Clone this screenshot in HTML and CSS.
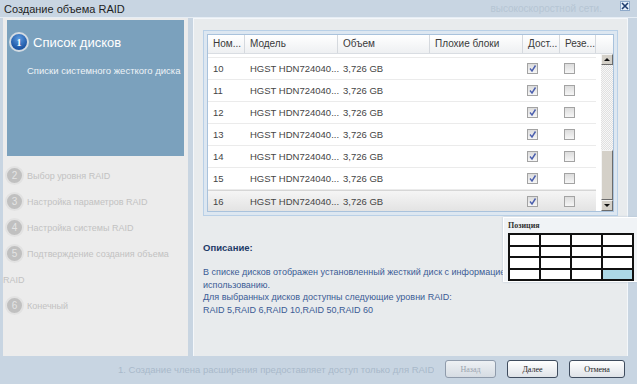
FILE: index.html
```html
<!DOCTYPE html>
<html lang="ru">
  <head>
    <meta charset="UTF-8" />
    <meta name="viewport" content="width=device-width, initial-scale=1.0" />
    <title>Создание объема RAID</title>
    <link rel="stylesheet" href="styles.css">
  </head>
  <body>
    <div class="window">
      <div class="titlebar">
        <span class="title">Создание объема RAID</span>
        <span class="ghost">высокоскоростной сети.</span>
        <span class="close">
          <svg width="8" height="8" viewBox="0 0 8 8">
            <path d="M1 1L7 7M7 1L1 7" stroke="#1f3d6e" stroke-width="1.6" />
          </svg>
        </span>
      </div>

      <div class="dialog">
        <div class="steps">
          <div class="current">
            <div class="current-head"><span class="num">1</span>Список дисков</div>
            <div class="current-desc">Списки системного жесткого диска</div>
          </div>
          <div class="todo">
            <span class="dot">2</span>Выбор уровня RAID<br />
            <span class="dot">3</span>Настройка параметров RAID<br />
            <span class="dot">4</span>Настройка системы RAID<br />
            <span class="dot">5</span>Подтверждение создания объема RAID<br />
            <span class="dot">6</span>Конечный
          </div>
        </div>

        <div class="main">
          <div class="grid-frame">
            <div class="grid">
              <div class="grid-head">
                <div class="hcell">Ном...</div>
                <div class="hcell">Модель</div>
                <div class="hcell">Объем</div>
                <div class="hcell">Плохие блоки</div>
                <div class="hcell">Дост...</div>
                <div class="hcell">Резе...</div>
                <div class="hcell"></div>
              </div>
              <div class="grid-body">
                <div class="rows" id="rows"></div>
                <div class="scrollbar">
                  <div class="sb-btn"><span class="arrow up"></span></div>
                  <div class="sb-track"></div>
                  <div class="sb-thumb"></div>
                  <div class="sb-btn"><span class="arrow down"></span></div>
                </div>
              </div>
            </div>
          </div>

          <div class="desc">
            <div class="desc-title">Описание:</div>
            <div class="desc-text">
              В списке дисков отображен установленный жесткий диск с информацией по<br />
              использованию.<br />
              Для выбранных дисков доступны следующие уровни RAID:<br />
              RAID 5,RAID 6,RAID 10,RAID 50,RAID 60
            </div>
          </div>
        </div>
      </div>

      <div class="footer">
        <span class="note">1. Создание члена расширения предоставляет доступ только для RAID 5, 6</span>
        <button class="btn" disabled>Назад</button>
        <button class="btn">Далее</button>
        <button class="btn">Отмена</button>
      </div>
    </div>

    <div class="position">
      <div class="position-title">Позиция</div>
      <div class="position-grid">
        <span></span><span></span><span></span><span></span>
        <span></span><span></span><span></span><span></span>
        <span></span><span></span><span></span><span></span>
        <span></span><span></span><span></span><span class="on"></span>
      </div>
    </div>

    <script>
      let disks = [];
      for (let n = 9; n <= 16; n++) {
        disks.push({ num: n, model: "HGST HDN724040...", size: "3,726 GB" });
      }

      let check = '<svg width="9" height="9" viewBox="0 0 9 9"><path d="M2 4.5L4 7L7.5 1.5" fill="none" stroke="#4b5fae" stroke-width="1.4"/></svg>';

      // first row is scrolled mostly out of view
      let rows = document.getElementById("rows");
      disks.forEach((d, i) => {
        let row = document.createElement("div");
        row.className = "row";
        if (i == 0) row.className += " partial";
        if (i == disks.length - 1) row.className += " selected";
        row.innerHTML =
          `<div class="cell txt">${d.num}</div>` +
          `<div class="cell txt">${d.model}</div>` +
          `<div class="cell txt">${d.size}</div>` +
          `<div class="cell"></div>` +
          `<div class="cell box-cell"><span class="box">${check}</span></div>` +
          `<div class="cell box-cell"><span class="box"></span></div>`;
        rows.appendChild(row);
      });
    </script>
  </body>
</html>
```

FILE: styles.css
```css
body {
  margin: 0;
  padding: 0;
  width: 637px;
  height: 384px;
  overflow: hidden;
  background: #c8d5e2;
  font-family: "Liberation Sans", Arial, sans-serif;
  font-size: 10px;
  position: relative;
}
.window {
  width: 637px;
  height: 384px;
  display: flex;
  flex-direction: column;
}

/* title bar */
.titlebar {
  height: 17px;
  display: flex;
  align-items: center;
  padding: 0 7px 0 4px;
  box-sizing: border-box;
}
.title {
  font-size: 11px;
  color: #1e1e1e;
}
.ghost {
  margin-left: auto;
  margin-right: 18px;
  color: #b6c5d4;
  font-size: 10px;
}
.close {
  width: 10px;
  height: 10px;
  border: 1px solid #8ea9c9;
  background: #e4eef9;
  display: flex;
  align-items: center;
  justify-content: center;
  margin-top: -6px;
  box-sizing: border-box;
}

/* body of the dialog */
.dialog {
  height: 339px;
  display: flex;
  padding-left: 3px;
  gap: 3px;
  border-top: 1px solid #e6edf4;
  box-sizing: border-box;
}
.steps {
  width: 187px;
  background: #ececec;
  border-right: 2px solid #c9d5e1;
  box-sizing: border-box;
}
.current {
  height: 136px;
  margin: 2px 4px 0 4px;
  background: #7ba1bd;
  color: white;
  box-sizing: border-box;
  padding-top: 12px;
  overflow: hidden;
}
.current-head {
  font-size: 13px;
  display: flex;
  align-items: center;
  height: 20px;
}
.num {
  width: 16px;
  height: 16px;
  border-radius: 50%;
  border: 2px solid #d3dbe2;
  background: radial-gradient(circle at 50% 30%, #5c9be0, #1d55a4 70%);
  color: white;
  font-family: "Liberation Serif", serif;
  font-weight: 700;
  font-size: 10px;
  display: flex;
  align-items: center;
  justify-content: center;
  margin: 0 4px 0 2px;
}
.current-desc {
  font-size: 9.5px;
  margin: 13px 0 0 20px;
  color: #eef3f7;
  white-space: nowrap;
}
.todo {
  margin-top: 7px;
  line-height: 26px;
  color: #c2c2c2;
  font-size: 9px;
}
.dot {
  display: inline-flex;
  align-items: center;
  justify-content: center;
  width: 15px;
  height: 15px;
  border-radius: 50%;
  border: 2px solid #e2e2e2;
  background: #c0c0c0;
  color: #e4e4e4;
  font-size: 10px;
  line-height: 1;
  vertical-align: middle;
  margin: -2px 3px 0 2px;
}

/* right side */
.main {
  width: 435px;
  background: #e8ebed;
  border: 1px solid #f4f7fa;
  border-bottom: none;
  padding: 11px 9px 0 9px;
  box-sizing: border-box;
}
.grid-frame {
  border: 1px solid #b9d0e7;
  background: #dde7f1;
  padding: 3px;
}
.grid {
  border: 1px solid #a9c2dc;
  background: white;
}
.grid-head {
  display: grid;
  grid-template-columns: 37px 93px 92px 93px 37px 36px 17px;
  height: 19px;
  border-bottom: 1px solid #d9dde2;
  box-sizing: border-box;
  background: linear-gradient(#ffffff, #eef0f2);
}
.hcell {
  padding-left: 5px;
  border-right: 1px solid #d5d9de;
  color: #3a3a3a;
  line-height: 18px;
  white-space: nowrap;
}
.hcell:last-child {
  border-right: none;
}
.grid-body {
  height: 157px;
  display: flex;
  overflow: hidden;
}
.rows {
  width: 388px;
  margin-top: -18px;
}
.row {
  display: grid;
  grid-template-columns: 37px 93px 92px 93px 37px 36px;
  height: 22px;
  border-bottom: 1px solid #ebebeb;
  box-sizing: border-box;
}
.row.partial .txt {
  visibility: hidden;
}
.row.selected {
  background: linear-gradient(#f5f5f5, #e3e3e3);
  border-top: 1px solid #d6d6d6;
}
.cell {
  padding-left: 5px;
  color: #454545;
  font-size: 9.5px;
  line-height: 21px;
  white-space: nowrap;
}
.box-cell {
  padding-left: 4px;
  display: flex;
  align-items: center;
}
.box {
  width: 11px;
  height: 11px;
  border: 1px solid #a3a3a3;
  background: linear-gradient(#dcdcdc, #f6f6f6);
  box-sizing: border-box;
  display: flex;
  align-items: center;
  justify-content: center;
}
.scrollbar {
  width: 12px;
  margin-left: 5px;
  display: flex;
  flex-direction: column;
}
.sb-btn,
.sb-thumb {
  background: #d4d0c8;
  border-top: 1px solid #f4f4f4;
  border-left: 1px solid #f4f4f4;
  border-right: 1px solid #6c6c6c;
  border-bottom: 1px solid #6c6c6c;
  box-sizing: border-box;
}
.sb-btn {
  height: 11px;
  display: flex;
  align-items: center;
  justify-content: center;
}
.sb-thumb {
  height: 50px;
}
.sb-track {
  flex: 1;
  background-color: #eeeeee;
  background-image: repeating-conic-gradient(#e0e0e0 0 25%, #f7f7f7 0 50%);
  background-size: 2px 2px;
}
.arrow {
  width: 0;
  height: 0;
  border-left: 3px solid transparent;
  border-right: 3px solid transparent;
}
.arrow.up {
  border-bottom: 3px solid #111;
}
.arrow.down {
  border-top: 3px solid #111;
}

.desc {
  padding-top: 25px;
}
.desc-title {
  font-weight: 700;
  font-size: 9.5px;
  color: #1d3a68;
  line-height: 13px;
}
.desc-text {
  margin-top: 12px;
  font-size: 9px;
  line-height: 12.5px;
  color: #3b5b95;
  white-space: nowrap;
}

/* footer */
.footer {
  flex: 1;
  display: flex;
  align-items: center;
  padding: 0 12px 2px 118px;
  gap: 11px;
}
.note {
  flex: 1;
  color: #a9b9ca;
  font-size: 9.5px;
  white-space: nowrap;
  overflow: hidden;
}
.btn {
  height: 18px;
  padding: 0;
  border: 1px solid #3f4c5e;
  border-radius: 3px;
  background: linear-gradient(#ffffff, #dfe3e8);
  font-family: "Liberation Serif", serif;
  font-size: 8px;
  color: #222;
}
.btn:nth-of-type(1) {
  width: 51px;
  border-color: #8f9bab;
  color: #9aa3ae;
  background: linear-gradient(#eef1f4, #d6dce3);
}
.btn:nth-of-type(2) {
  width: 51px;
}
.btn:nth-of-type(3) {
  width: 56px;
}

/* position picker popup */
.position {
  position: absolute;
  left: 503px;
  top: 217px;
  width: 140px;
  height: 65px;
  background: #f0f3f6;
  border: 1px solid #ffffff;
  box-shadow: 0 0 2px #b4c4d4;
  box-sizing: border-box;
  padding: 3px 0 0 4px;
}
.position-title {
  font-family: "Liberation Serif", serif;
  font-weight: 700;
  font-size: 8px;
  color: #333;
}
.position-grid {
  margin-top: 3px;
  width: 126px;
  display: grid;
  grid-template-columns: repeat(4, 1fr);
  grid-auto-rows: 9.5px;
  gap: 2px;
  padding: 2px;
  background: #111;
  box-sizing: border-box;
}
.position-grid span {
  background: white;
}
.position-grid span.on {
  background: #add8e6;
}
```
